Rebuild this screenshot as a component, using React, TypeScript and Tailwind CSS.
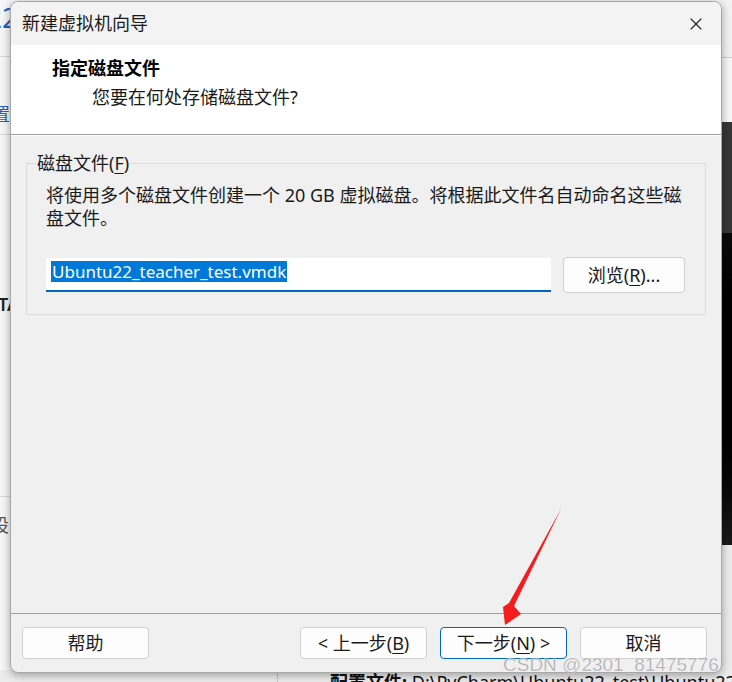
import { X } from "lucide-react";

const SANS = "font-['Noto_Sans','Noto_Sans_CJK_SC',sans-serif]";

const Mnemonic = ({ ch }: { ch: string }) => (
  <span className="underline underline-offset-[3px] decoration-1">{ch}</span>
);

const DialogButton = ({
  children,
  primary,
}: {
  children: React.ReactNode;
  primary?: boolean;
}) => (
  <button
    className={`w-[127px] h-[32px] rounded-[4px] bg-[#fdfdfd] text-[18px] leading-none text-[#1b1b1b] flex items-center justify-center ${
      primary ? "border border-[#0067c0]" : "border border-[#d0d0d0]"
    }`}
  >
    {children}
  </button>
);

// window sitting behind the dialog (only its edges show)
const Backdrop = () => (
  <div className={`absolute inset-0 bg-[#f7f7f7] ${SANS}`}>
    {/* left strip */}
    <div className="absolute left-[-14px] top-[3px] text-[28px] leading-none text-[#1a63c7]">22</div>
    <div className="absolute left-0 top-[56px] w-[12px] h-px bg-[#d8d8d8]" />
    <div className="absolute left-[-8px] top-[101px] text-[18px] text-[#1a63c7]">置</div>
    <div className="absolute left-0 top-[134px] w-[12px] h-px bg-[#d8d8d8]" />
    <div className="absolute left-[-2px] top-[291px] text-[18px] font-semibold text-[#222]">TA</div>
    <div className="absolute left-0 top-[496px] w-[12px] h-px bg-[#d8d8d8]" />
    <div className="absolute left-[-9px] top-[512px] text-[18px] text-[#555]">设</div>

    {/* right strip */}
    <div className="absolute right-0 top-0 w-[12px] h-[57px] bg-[#f3f3f3]" />
    <div className="absolute right-0 top-[57px] w-[12px] h-px bg-[#cfcfcf]" />
    <div className="absolute right-0 top-[122px] w-[12px] h-[111px] bg-[#363636]" />
    <div className="absolute right-0 top-[233px] w-[12px] h-[312px] bg-gradient-to-b from-[#0a0a0a] via-black to-[#1a1a1a]" />
    <div className="absolute right-0 top-[545px] w-[12px] h-[137px] bg-[#ececec]" />

    {/* bottom strip */}
    <div className="absolute left-0 right-0 bottom-0 h-[12px] bg-[#ececec]" />
    <div className="absolute left-[277px] bottom-0 w-px h-[12px] bg-[#c8c8c8]" />
    <div className="absolute left-[330px] top-[672px] whitespace-nowrap text-[18px] leading-[20px] text-[#111]">
      <span className="font-bold">配置文件:</span> D:\PyCharm\Ubuntu22_test\Ubuntu22_teacher_test.vmx
    </div>
  </div>
);

export default function App() {
  return (
    <div className="relative w-[732px] h-[682px] overflow-hidden">
      <Backdrop />

      {/* dialog */}
      <div
        className={`absolute left-[10px] top-[1px] w-[712px] h-[672px] flex flex-col overflow-hidden rounded-[8px] border border-[#a8a8a8] bg-[#f0f0f0] shadow-[0_2px_10px_rgba(0,0,0,0.35)] ${SANS}`}
      >
        {/* title bar */}
        <div className="h-[43px] shrink-0 bg-[#f3f3f3] flex items-center justify-between pl-[11px] pr-[15px]">
          <span className="text-[18px] text-[#1a1a1a]">新建虚拟机向导</span>
          <X className="w-[20px] h-[20px] text-[#222]" strokeWidth={1.3} />
        </div>

        {/* header */}
        <div className="h-[90px] shrink-0 bg-white border-b border-[#a0a0a0] pl-[41px] pt-[12px]">
          <div className="text-[18px] font-bold leading-[22px] text-black">指定磁盘文件</div>
          <div className="mt-[7px] ml-[40px] text-[18px] leading-[22px] text-[#1a1a1a]">
            您要在何处存储磁盘文件?
          </div>
        </div>

        {/* body */}
        <div className="flex-1 border-t border-white px-[15px] pt-[17px]">
          <fieldset className="h-[162px] border border-[#dcdcdc] pl-[19px] pr-[20px] m-0">
            <legend className="ml-[-10px] px-[1px] text-[18px] leading-[20px] text-[#1a1a1a]">
              磁盘文件(<Mnemonic ch="F" />)
            </legend>
            <p className="mt-[11px] text-[18px] leading-[23px] text-[#1a1a1a] whitespace-nowrap">
              将使用多个磁盘文件创建一个 20 GB 虚拟磁盘。将根据此文件名自动命名这些磁
              <br />
              盘文件。
            </p>
            <div className="mt-[28px] flex items-start gap-[12px]">
              <div className="w-[505px] h-[34px] bg-white border-b-2 border-[#0067c0] pl-[5px] pt-[2px]">
                <span className="inline-block bg-[#0078d7] text-white text-[17px] leading-[21px] px-[1px]">
                  Ubuntu22_teacher_test.vmdk
                </span>
              </div>
              <button className="w-[122px] h-[36px] -mt-[1px] rounded-[4px] border border-[#d0d0d0] bg-[#fdfdfd] text-[18px] text-[#1a1a1a]">
                浏览(<Mnemonic ch="R" />)...
              </button>
            </div>
          </fieldset>
        </div>

        {/* footer */}
        <div className="h-[59px] shrink-0 border-t border-[#a0a0a0] flex items-start pt-[13px] pl-[11px] pr-[14px]">
          <DialogButton>帮助</DialogButton>
          <div className="ml-auto flex gap-[13px]">
            <DialogButton>
              &lt; 上一步(<Mnemonic ch="B" />)
            </DialogButton>
            <DialogButton primary>
              下一步(<Mnemonic ch="N" />) &gt;
            </DialogButton>
            <DialogButton>取消</DialogButton>
          </div>
        </div>
      </div>

      {/* red annotation arrow */}
      <svg className="absolute inset-0 pointer-events-none" width={732} height={682} viewBox="0 0 732 682">
        <polygon
          points="561,509 514,606 521,614 505,625 503,607 509,603"
          fill="#f41c1c"
        />
      </svg>

      {/* watermark */}
      <div className="absolute left-[503px] top-[653px] text-[19px] leading-[24px] whitespace-nowrap text-[#8e8e8e]/70 font-['Liberation_Sans',sans-serif] [-webkit-text-stroke:0.4px_rgba(255,255,255,0.6)]">
        CSDN @2301_81475776
      </div>
    </div>
  );
}
